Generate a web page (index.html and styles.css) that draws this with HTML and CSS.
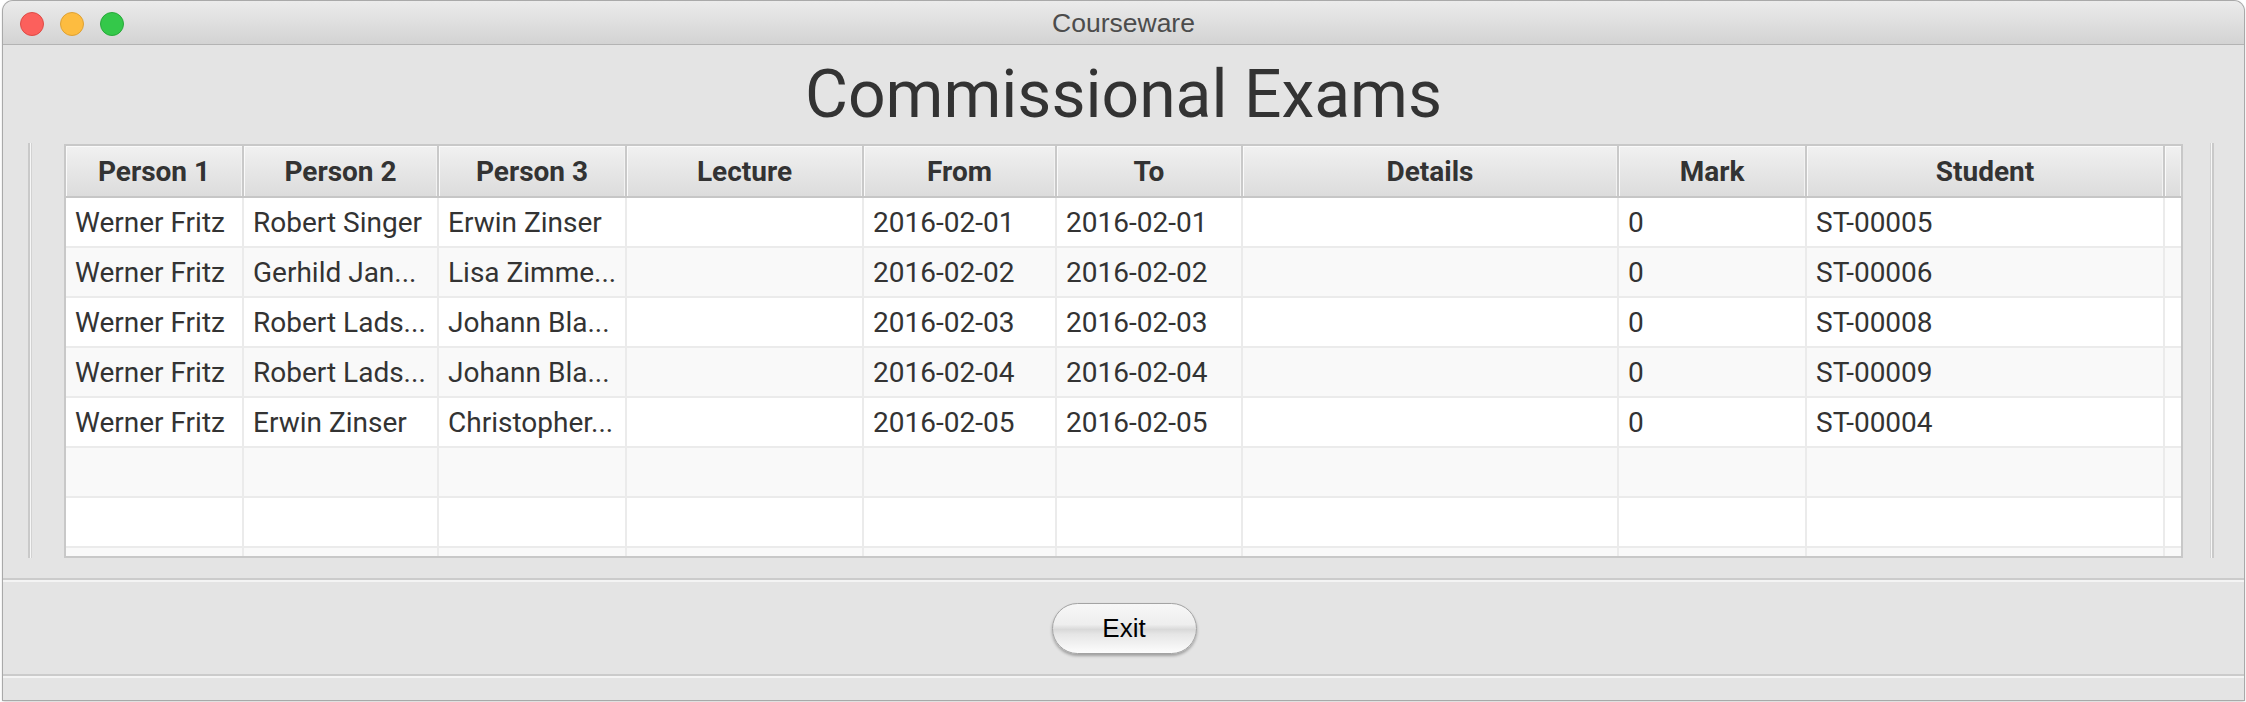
FILE: index.html
```html
<!DOCTYPE html>
<html lang="en">
<head>
<meta charset="utf-8">
<title>Courseware</title>
<link rel="stylesheet" href="styles.css">
</head>
<body>
<div class="window">
  <div class="titlebar">
    <div class="lights">
      <span class="light red"></span>
      <span class="light yellow"></span>
      <span class="light green"></span>
    </div>
    <div class="wtitle">Courseware</div>
    <div></div>
  </div>
  <div class="content">
    <h1 class="heading">Commissional Exams</h1>
    <div class="pane">
      <div class="table">
        <div class="row head">
          <div class="hc">Person 1</div>
          <div class="hc">Person 2</div>
          <div class="hc">Person 3</div>
          <div class="hc">Lecture</div>
          <div class="hc">From</div>
          <div class="hc">To</div>
          <div class="hc">Details</div>
          <div class="hc">Mark</div>
          <div class="hc">Student</div>
          <div class="hc filler"></div>
        </div>
        <div class="row">
          <div class="c">Werner Fritz</div><div class="c">Robert Singer</div><div class="c">Erwin Zinser</div><div class="c"></div><div class="c">2016-02-01</div><div class="c">2016-02-01</div><div class="c"></div><div class="c">0</div><div class="c">ST-00005</div><div class="c filler"></div>
        </div>
        <div class="row alt">
          <div class="c">Werner Fritz</div><div class="c">Gerhild Jan...</div><div class="c">Lisa Zimme...</div><div class="c"></div><div class="c">2016-02-02</div><div class="c">2016-02-02</div><div class="c"></div><div class="c">0</div><div class="c">ST-00006</div><div class="c filler"></div>
        </div>
        <div class="row">
          <div class="c">Werner Fritz</div><div class="c">Robert Lads...</div><div class="c">Johann Bla...</div><div class="c"></div><div class="c">2016-02-03</div><div class="c">2016-02-03</div><div class="c"></div><div class="c">0</div><div class="c">ST-00008</div><div class="c filler"></div>
        </div>
        <div class="row alt">
          <div class="c">Werner Fritz</div><div class="c">Robert Lads...</div><div class="c">Johann Bla...</div><div class="c"></div><div class="c">2016-02-04</div><div class="c">2016-02-04</div><div class="c"></div><div class="c">0</div><div class="c">ST-00009</div><div class="c filler"></div>
        </div>
        <div class="row">
          <div class="c">Werner Fritz</div><div class="c">Erwin Zinser</div><div class="c">Christopher...</div><div class="c"></div><div class="c">2016-02-05</div><div class="c">2016-02-05</div><div class="c"></div><div class="c">0</div><div class="c">ST-00004</div><div class="c filler"></div>
        </div>
        <div class="row alt">
          <div class="c"></div><div class="c"></div><div class="c"></div><div class="c"></div><div class="c"></div><div class="c"></div><div class="c"></div><div class="c"></div><div class="c"></div><div class="c filler"></div>
        </div>
        <div class="row">
          <div class="c"></div><div class="c"></div><div class="c"></div><div class="c"></div><div class="c"></div><div class="c"></div><div class="c"></div><div class="c"></div><div class="c"></div><div class="c filler"></div>
        </div>
        <div class="row alt">
          <div class="c"></div><div class="c"></div><div class="c"></div><div class="c"></div><div class="c"></div><div class="c"></div><div class="c"></div><div class="c"></div><div class="c"></div><div class="c filler"></div>
        </div>
      </div>
    </div>
    <div class="sep"></div>
    <div class="buttons">
      <button class="btn" type="button">Exit</button>
    </div>
    <div class="sep"></div>
    <div class="bottom"></div>
  </div>
</div>
</body>
</html>
```

FILE: styles.css
```css
html, body {
  margin: 0;
  padding: 0;
}
body {
  background: #ffffff;
  padding: 1px 0 0 3px;
  width: 2246px;
  height: 702px;
  box-sizing: border-box;
  overflow: hidden;
}
.window {
  width: 2241px;
  height: 699px;
  display: flex;
  flex-direction: column;
  background: #e4e4e4;
  border-radius: 10px 10px 0 0;
  box-shadow: 0 0 0 1px #a9a9a9, 0 1px 3px rgba(0,0,0,0.35);
  overflow: hidden;
}
.titlebar {
  height: 43px;
  flex: none;
  display: grid;
  grid-template-columns: 1fr auto 1fr;
  align-items: center;
  background: linear-gradient(#ebebeb, #d3d3d3);
  border-bottom: 1px solid #b3b3b3;
}
.lights {
  display: flex;
  gap: 16px;
  padding-left: 17px;
  margin-top: 2px;
}
.light {
  width: 24px;
  height: 24px;
  border-radius: 50%;
  box-sizing: border-box;
}
.red { background: #fc605c; border: 1px solid #de4b46; }
.yellow { background: #fdbc40; border: 1px solid #dea134; }
.green { background: #34c84a; border: 1px solid #28a93a; }
.wtitle {
  font-family: "Liberation Sans", Arial, sans-serif;
  font-size: 26.5px;
  color: #4c4c4c;
  padding-top: 2px;
}
.content {
  flex: 1;
  display: flex;
  flex-direction: column;
}
.heading {
  margin: 0;
  height: 98px;
  box-sizing: border-box;
  padding-top: 2px;
  line-height: 96px;
  text-align: center;
  font-family: Roboto, "Noto Sans", sans-serif;
  font-weight: 400;
  font-size: 66px;
  color: #333333;
}
.pane {
  height: 415px;
  box-sizing: border-box;
  margin: 0 30px 0 25px;
  padding: 1px 29px 0 34px;
  border-left: 2px solid #c9c9c9;
  border-right: 2px solid #c9c9c9;
  box-shadow: inset 1px 0 0 #f7f7f7, inset 2px 0 0 #d2d2d2, inset -1px 0 0 #f7f7f7, inset -2px 0 0 #d2d2d2;
}
.table {
  height: 414px;
  box-sizing: border-box;
  border: 2px solid #c8c8c8;
  background: #ffffff;
  overflow: hidden;
  font-family: Roboto, "Noto Sans", sans-serif;
  color: #333333;
}
.row {
  display: grid;
  grid-template-columns: 178px 195px 188px 237px 193px 186px 376px 188px 358px 1fr;
  height: 50px;
  box-sizing: border-box;
  border-bottom: 2px solid #ebebeb;
  background: #ffffff;
}
.row.alt {
  background: #f9f9f9;
}
.row.head {
  height: 52px;
  border-bottom: 2px solid #c6c6c6;
  background: linear-gradient(#f1f1f1, #dcdcdc);
}
.hc {
  box-sizing: border-box;
  border-right: 2px solid #c9c9c9;
  box-shadow: inset 1px 1px 0 #fafafa, inset -1px 0 0 #f2f2f2;
  display: flex;
  align-items: center;
  justify-content: center;
  font-weight: 700;
  font-size: 28px;
  padding-top: 1px;
}
.hc.filler {
  border-right: none;
}
.c {
  box-sizing: border-box;
  border-right: 2px solid #ebebeb;
  display: flex;
  align-items: center;
  padding: 0 9px;
  font-size: 28px;
  white-space: nowrap;
  overflow: hidden;
}
.c.filler {
  border-right: none;
}
.sep {
  flex: none;
  height: 2px;
  background: #cbcbcb;
  border-bottom: 2px solid #f4f4f4;
}
.pane + .sep {
  margin-top: 20px;
}
.buttons {
  height: 92px;
  flex: none;
  display: flex;
  justify-content: center;
  align-items: flex-start;
  padding-top: 21px;
  box-sizing: border-box;
}
.btn {
  width: 145px;
  height: 51px;
  border-radius: 26px;
  border: 1px solid #a3a3a3;
  background: linear-gradient(#f7f7f7 0%, #eeeeee 42%, #d9d9d9 52%, #e6e6e6 62%, #fdfdfd 100%);
  box-shadow: 0 2px 3px rgba(0,0,0,0.3);
  font-family: "Liberation Sans", Arial, sans-serif;
  font-size: 26px;
  color: #000000;
  padding: 0;
  margin-left: 1px;
}
.bottom {
  flex: 1;
}
```
